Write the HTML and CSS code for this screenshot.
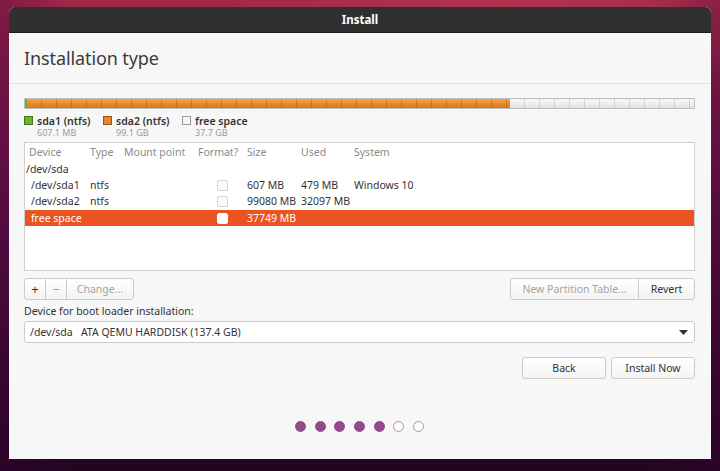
FILE: index.html
```html
<!DOCTYPE html>
<html>
<head>
<meta charset="utf-8">
<link rel="stylesheet" href="styles.css">
</head>
<body>
<div class="window">
  <div class="titlebar">Install</div>
  <div class="header"><h1>Installation type</h1></div>
  <div class="content">
    <div class="pbar">
      <div class="seg seg-green" style="width:0.3%"></div>
      <div class="seg seg-orange" style="width:72.2%"></div>
      <div class="seg seg-free"></div>
    </div>
    <div class="legend">
      <div class="litem">
        <div class="lrow"><span class="sq sq-green"></span><span class="lname">sda1 (ntfs)</span></div>
        <div class="lsize">607.1 MB</div>
      </div>
      <div class="litem">
        <div class="lrow"><span class="sq sq-orange"></span><span class="lname">sda2 (ntfs)</span></div>
        <div class="lsize">99.1 GB</div>
      </div>
      <div class="litem">
        <div class="lrow"><span class="sq sq-free"></span><span class="lname">free space</span></div>
        <div class="lsize">37.7 GB</div>
      </div>
    </div>
    <div class="table">
      <div class="row head">
        <span>Device</span><span>Type</span><span>Mount point</span><span>Format?</span><span>Size</span><span>Used</span><span>System</span>
      </div>
      <div class="row">
        <span class="dev0">/dev/sda</span><span></span><span></span><span></span><span></span><span></span><span></span>
      </div>
      <div class="row">
        <span class="dev1">/dev/sda1</span><span>ntfs</span><span></span><span class="chk"><i class="box"></i></span><span>607 MB</span><span>479 MB</span><span>Windows 10</span>
      </div>
      <div class="row">
        <span class="dev1">/dev/sda2</span><span>ntfs</span><span></span><span class="chk"><i class="box"></i></span><span>99080 MB</span><span>32097 MB</span><span></span>
      </div>
      <div class="row sel">
        <span class="dev1">free space</span><span></span><span></span><span class="chk"><i class="box"></i></span><span>37749 MB</span><span></span><span></span>
      </div>
    </div>
    <div class="tools">
      <div class="group">
        <button class="btn icon">+</button><button class="btn icon dim">−</button><button class="btn dim change">Change...</button>
      </div>
      <div class="group">
        <button class="btn dim npt">New Partition Table...</button><button class="btn revert">Revert</button>
      </div>
    </div>
    <div class="bootlabel">Device for boot loader installation:</div>
    <div class="combo">
      <span>/dev/sda&nbsp;&nbsp;&nbsp;ATA QEMU HARDDISK (137.4 GB)</span>
      <svg width="9" height="5" viewBox="0 0 9 5"><path d="M0 0h9L4.5 5z" fill="#333"/></svg>
    </div>
    <div class="actions">
      <button class="btn act">Back</button>
      <button class="btn act">Install Now</button>
    </div>
    <div class="dots">
      <i class="dot on"></i><i class="dot on"></i><i class="dot on"></i><i class="dot on"></i><i class="dot on"></i><i class="dot"></i><i class="dot"></i>
    </div>
  </div>
</div>
</body>
</html>
```
FILE: styles.css
```css
* { box-sizing: border-box; }
html, body { margin: 0; height: 100%; }
body {
  width: 720px;
  height: 471px;
  overflow: hidden;
  padding: 7px 9px 0 9px;
  background:
    radial-gradient(ellipse 60% 40% at 70% 0%, rgba(190,60,80,0.55), transparent 70%),
    linear-gradient(90deg, rgba(60,0,60,0.35) 0%, transparent 10%, transparent 90%, rgba(60,0,50,0.35) 100%),
    linear-gradient(180deg, #a2284a 0%, #841c48 20%, #5a1042 50%, #34082c 80%, #220620 100%);
  font-family: "Noto Sans", "Open Sans", sans-serif;
  color: #3c3c3c;
}
.window {
  width: 702px;
  height: 452px;
  background: #f7f7f7;
  border-radius: 6px 6px 0 0;
  overflow: hidden;
  display: flex;
  flex-direction: column;
}
.titlebar {
  height: 26px;
  background: #303030;
  color: #ffffff;
  font-size: 11.5px;
  font-weight: bold;
  display: flex;
  align-items: center;
  justify-content: center;
  border-bottom: 1px solid #1e1e1e;
}
.header {
  height: 51px;
  border-bottom: 1px solid #e1e1e1;
  padding: 0 15px;
  display: flex;
  align-items: center;
}
.header h1 {
  margin: 0;
  font-weight: normal;
  font-size: 18px;
  color: #3a3a3a;
  letter-spacing: -0.1px;
}
.content {
  padding: 14px 16px 0 15px;
  display: flex;
  flex-direction: column;
  flex: 1;
}
.pbar {
  height: 11px;
  display: flex;
  border: 1px solid #bdbdbd;
  border-radius: 1px;
}
.seg { height: 100%; }
.seg-green { background: #6ab42c; }
.seg-orange {
  background-image: repeating-linear-gradient(90deg, transparent 0 14px, rgba(120,60,0,0.25) 14px 15px), linear-gradient(180deg, #f3a456 0%, #ea8a2a 50%, #dc7718 100%);
}
.seg-free {
  flex: 1;
  background-image: repeating-linear-gradient(90deg, transparent 0 14px, rgba(0,0,0,0.12) 14px 15px), linear-gradient(180deg, #f7f7f7 0%, #ececec 60%, #dedede 100%);
}
.legend {
  display: flex;
  margin-top: 5px;
  height: 28px;
}
.litem { width: 79px; }
.lrow { display: flex; align-items: center; height: 13px; }
.sq {
  width: 9px; height: 9px;
  border: 1px solid rgba(0,0,0,0.35);
  margin-right: 4px;
  display: inline-block;
}
.sq-green { background: #6ab42c; }
.sq-orange { background: #e9862a; }
.sq-free { background: #f6f6f6; border-color: #999; }
.lname { font-size: 10.5px; color: #333; font-weight: 600; }
.lsize { font-size: 9px; color: #9a9a9a; padding-left: 13px; line-height: 11px; }
.table {
  height: 129px;
  border: 1px solid #cfcfcf;
  background: #ffffff;
  font-size: 10.5px;
}
.row {
  display: grid;
  grid-template-columns: 65px 34px 74px 49px 54px 53px 1fr;
  height: 16px;
  align-items: center;
  color: #333;
}
.row.head { height: 18px; color: #8a8a8a; }
.row.head span:first-child { padding-left: 4px; }
.dev0 { padding-left: 1px; }
.dev1 { padding-left: 6px; }
.row span { white-space: nowrap; }
.chk { display: flex; justify-content: center; }
.box {
  width: 11px; height: 11px;
  border: 1px solid #d4d4d4;
  border-radius: 2px;
  background: #fbfbfb;
  display: block;
}
.row.sel { background: #e95420; color: #ffffff; margin-top: 1px; }
.row.sel .box { background: #ffffff; border-color: #ffffff; }
.tools {
  display: flex;
  justify-content: space-between;
  margin-top: 7px;
  height: 22px;
}
.group { display: flex; }
.btn {
  font-family: inherit;
  font-size: 10.5px;
  color: #333;
  background: linear-gradient(180deg, #ffffff, #f3f3f3);
  border: 1px solid #cfcac6;
  border-radius: 3px;
  padding: 0;
  height: 22px;
}
.group .btn { border-radius: 0; margin-left: -1px; }
.group .btn:first-child { border-radius: 3px 0 0 3px; margin-left: 0; }
.group .btn:last-child { border-radius: 0 3px 3px 0; }
.btn.dim { color: #a4a4a4; }
.btn.icon { width: 22px; font-size: 13px; line-height: 1; }
.btn.change { width: 68px; }
.btn.npt { width: 129px; }
.btn.revert { width: 57px; }
.bootlabel {
  font-size: 10.5px;
  color: #333;
  margin-top: 3px;
  height: 16px;
  line-height: 16px;
}
.combo {
  height: 22px;
  margin-top: 2px;
  border: 1px solid #cfcac6;
  border-radius: 3px;
  background: #ffffff;
  display: flex;
  align-items: center;
  justify-content: space-between;
  padding: 0 6px 0 5px;
  font-size: 10.5px;
  color: #333;
}
.actions {
  display: flex;
  justify-content: flex-end;
  gap: 5px;
  margin-top: 14px;
}
.btn.act { width: 84px; font-size: 10.5px; }
.dots {
  display: flex;
  justify-content: center;
  gap: 8.7px;
  margin-top: 42px;
}
.dot {
  width: 11px; height: 11px;
  border-radius: 50%;
  border: 1px solid #b48aa9;
  background: #ffffff;
  display: block;
}
.dot.on { background: #924a8a; border-color: #924a8a; }
```
